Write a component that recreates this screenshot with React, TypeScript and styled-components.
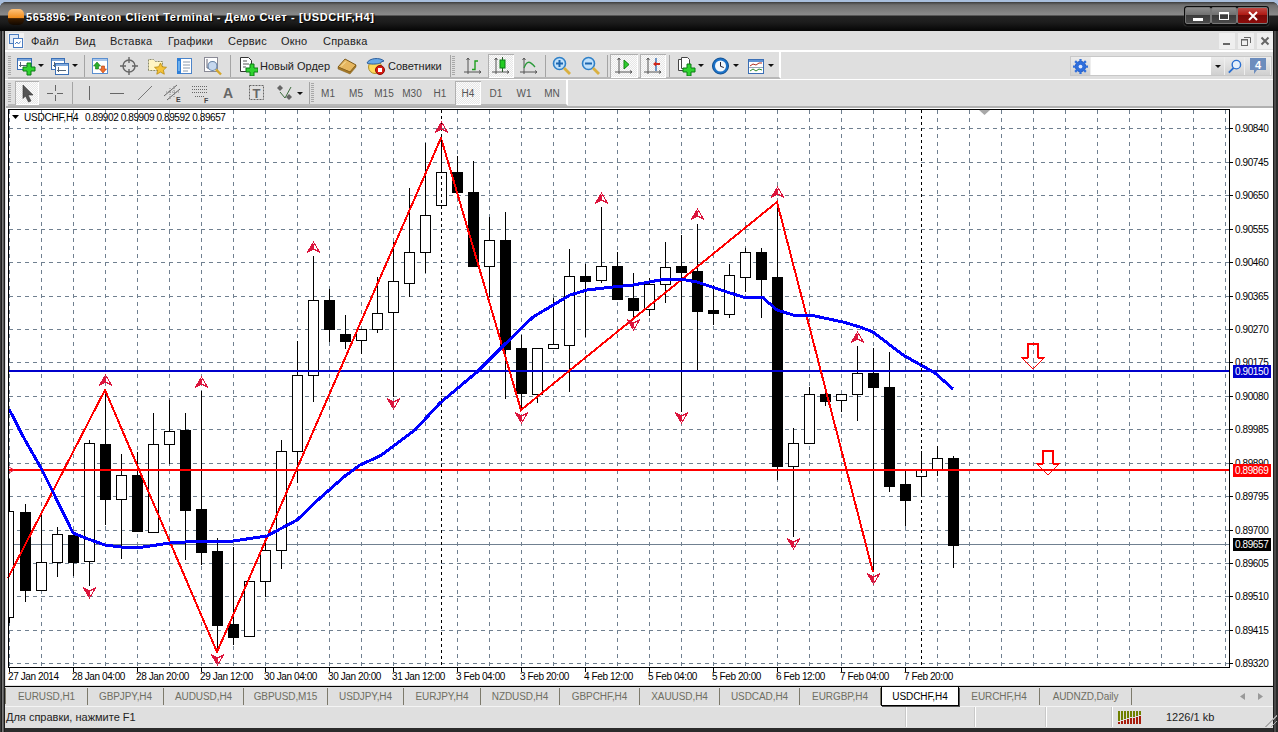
import React from "react";
import styled, { createGlobalStyle } from "styled-components";

const Global = createGlobalStyle`
  html, body { margin: 0; padding: 0; width: 1278px; height: 732px; overflow: hidden; background: #a8bedc; }
  * { box-sizing: border-box; }
`;
const UI = `"Liberation Sans", Arial, sans-serif`;

const Desktop = styled.div`width:1278px;height:732px;padding-top:2px;display:flex;`;
const Win = styled.div`
  width:1278px;height:730px;display:flex;flex-direction:column;
  border-radius:6px 6px 0 0;overflow:hidden;
  background:
    linear-gradient(90deg,#3a3a3a 0 1px,#1c1c1c 1px 2px,#7a7a7a 2px 3px,#5a5a5a 3px 4px,#1c1c1c 4px 5px,transparent 5px) left/5px 100% no-repeat,
    linear-gradient(90deg,#1c1c1c 0 1px,#4a4a4a 1px 3px,#2a2a2a 3px 5px) right/5px 100% no-repeat,
    #2b2b2b;
`;
const TitleBar = styled.div`
  height:29px;flex:none;display:flex;align-items:center;padding:0 8px 0 6px;
  background:linear-gradient(#3c3c3c 0,#6f6f6f 3px,#8a8a8a 13px,#222 14px,#1d1d1d 20px,#050505 29px);
`;
const TitleIcon = styled.div`
  width:16px;height:16px;margin:1px 2px 0 2px;border-radius:5px;
  background:linear-gradient(#ffc27a 0,#f08c1c 55%,#3a1c00 60%,#120800 100%);
`;
const TitleText = styled.div`
  flex:1;font:bold 11px ${UI};letter-spacing:.6px;color:#fff;text-shadow:1px 1px 1px #000;white-space:nowrap;
`;
const WinBtns = styled.div`
  display:flex;align-items:center;height:20px;padding:1px;border-radius:3px;background:#0c0c0c;box-shadow:0 0 1px #888;margin-right:1px;margin-top:-2px;
`;
const WinBtn = styled.div<{ $w: number; $red?: boolean }>`
  width:${p => p.$w}px;height:17px;display:flex;align-items:center;justify-content:center;border:1px solid #777;border-radius:2px;
  background:${p => p.$red ? "linear-gradient(#c04a44 0,#b01a14 45%,#7a0a08 50%,#8c0c0a 100%)" : "linear-gradient(#8c8c8c 0,#707070 45%,#3a3a3a 50%,#4a4a4a 100%)"};
`;
const Body = styled.div`
  flex:1;display:flex;flex-direction:column;margin:0 5px 4px 5px;min-height:0;background:#dfdfdf;
`;
const MenuBar = styled.div`
  height:20px;flex:none;display:flex;align-items:center;border-bottom:1px solid #fff;background:#dfdfdf;padding-left:3px;
`;
const MenuIcon = styled.div`width:16px;height:16px;margin-right:7px;display:flex;`;
const MenuItem = styled.span<{ $w: number }>`
  width:${p => p.$w}px;flex:none;font:11px ${UI};letter-spacing:.2px;color:#222;
`;
const MdiBtns = styled.div`margin-left:auto;display:flex;gap:3px;padding-right:0;`;
const MdiBtn = styled.div`
  width:16px;height:16px;background:#efefef;display:flex;align-items:center;justify-content:center;
`;
const ToolRow = styled.div<{ $h: number }>`
  height:${p => p.$h}px;flex:none;display:flex;align-items:center;background:#dfdfdf;position:relative;border-top:1px solid #fff;padding-left:3px;
`;
const Band = styled.div<{ $h: number }>`
  height:${p => p.$h}px;padding-top:2px;display:flex;align-items:center;border-right:2px solid #fff;border-bottom:2px solid #b8b8b8;
`;
const Grip = styled.div<{ $w?: number }>`
  width:${p => p.$w ?? 6}px;height:20px;flex:none;
  background:repeating-linear-gradient(#a8a8a8 0 1px,transparent 1px 2px) left/3px 100% no-repeat;
`;
const Sep = styled.div`width:4px;height:22px;flex:none;display:flex;justify-content:center;&::before{content:"";width:1px;background:#a4a4a4;}`;
const Tool = styled.div<{ $w: number; $on?: boolean; $pad?: number }>`
  width:${p => p.$w}px;height:24px;flex:none;display:flex;align-items:center;justify-content:${p => p.$pad !== undefined ? "flex-start" : "center"};
  padding-left:${p => p.$pad ?? 0}px;gap:1px;
  ${p => p.$on ? `background:repeating-conic-gradient(#e6e6e6 0 25%,#fbfbfb 0 50%) 0 0/2px 2px;box-shadow:inset 1px 1px 0 #b0b0b0,inset -1px -1px 0 #fff;margin:0 1px;width:${p.$w - 2}px;` : ""}
`;
const Caret = styled.i`
  display:block;width:0;height:0;border-left:3px solid transparent;border-right:3px solid transparent;border-top:3px solid #111;margin-left:1px;
`;
const ToolLabel = styled.span`font:11px ${UI};color:#222;margin-left:1px;white-space:nowrap;`;
const TfLabel = styled.span`font:10px ${UI};color:#555;`;
const Search = styled.div`
  position:absolute;right:1px;top:4px;width:202px;height:20px;display:flex;border:1px solid #c8c8c8;border-top-color:#c8c8c8;background:#dcdcdc;
`;
const SearchIcon = styled.div<{ $w: number }>`
  width:${p => p.$w}px;flex:none;display:flex;align-items:center;justify-content:center;background:linear-gradient(#ececec,#d0d0d0);border-right:1px solid #eee;
`;
const SearchInput = styled.div`flex:1;background:#fff;`;

const ChartPanel = styled.div`height:579px;flex:none;background:#fff;border-top:2px solid #b0b0b0;margin-left:1px;display:flex;`;
const TabBar = styled.div`
  height:21px;flex:none;display:flex;align-items:stretch;border-top:1px solid #000;border-bottom:1px solid #f4f4f4;background:#dfdfdf;position:relative;padding-left:0;margin-top:1px;
  &::before{content:"";width:1px;height:16px;margin-top:1px;background:#7d7a6c;}
`;
const Tab = styled.div<{ $w: number; $on?: boolean; $nosep?: boolean }>`
  width:${p => p.$w}px;flex:none;display:flex;align-items:center;justify-content:center;font:10px ${UI};letter-spacing:-.08px;
  height:${p => p.$on ? 19 : 17}px;margin-top:${p => p.$on ? 0 : 1}px;
  color:${p => p.$on ? "#000" : "#6e6e62"};
  background:${p => p.$on ? "#fff" : "transparent"};
  ${p => p.$on ? "border:1px solid #000;border-top:none;border-right-width:1px;box-shadow:1px 1px 0 #555;" : p.$nosep ? "" : "border-right:1px solid #7d7a6c;"}
`;
const TabNav = styled.div`position:absolute;right:9px;top:6px;display:flex;gap:11px;`;
const StatusBar = styled.div`height:20px;flex:none;display:flex;align-items:center;background:#dfdfdf;font:11px ${UI};color:#222;position:relative;`;
const StatusCell = styled.div<{ $w: number }>`
  width:${p => p.$w}px;flex:none;height:20px;display:flex;align-items:center;border-right:1px solid #fff;box-shadow:inset -1px 0 0 #c8c8c8;padding-left:1px;
`;
const StatusRest = styled.div`flex:1;display:flex;align-items:center;gap:24px;padding-left:5px;`;
const Gripper = styled.div`
  position:absolute;right:-4px;bottom:0;width:16px;height:16px;
  background:repeating-linear-gradient(135deg,transparent 0 2px,#aaa 2px 3px,transparent 3px 4px);
  clip-path:polygon(100% 0,100% 100%,0 100%);
`;
const Ico = styled.svg<{ $s?: number }>`display:block;flex:none;width:${p => p.$s ?? 20}px;height:${p => p.$s ?? 20}px;`;
const Meter = styled.svg`display:block;flex:none;width:24px;height:13px;`;
const ChartSvg = styled.svg`display:block;width:1267px;height:577px;font-family:"Liberation Sans",Arial,sans-serif;font-size:10px;letter-spacing:-.4px;`;

/* ---------- icons ---------- */
const PlusG = ({ x, y, s = 1 }: { x: number; y: number; s?: number }) => (
  <path transform={`translate(${x} ${y}) scale(${s})`} d="M-2-6h4v4h4v4h-4v4h-4v-4h-4v-4h4z" fill="#2fd32f" stroke="#0b7d14" strokeWidth="1" />
);
const Axes = ({ c = "#555" }: { c?: string }) => (
  <g stroke={c} fill="none"><path d="M5 2v16M1 16h17M3.5 4L5 2l1.5 2M16 14.5l2 1.5-2 1.5" /></g>
);
const MiniWin = ({ x, y, w = 13, h = 11 }: { x: number; y: number; w?: number; h?: number }) => (
  <g>
    <rect x={x + .5} y={y + .5} width={w} height={h} fill="#fff" stroke="#3b6fb5" />
    <rect x={x + 1} y={y + 1} width={w - 1} height="2" fill="#7fa9dc" />
    <path d={`M${x + 3.5} ${y + 4}v5M${x + 2} ${y + 7.5}h${w - 4}`} stroke="#567" />
  </g>
);
const INewChart = () => <Ico viewBox="0 0 20 20"><MiniWin x={1} y={2} w={14} h={11} /><PlusG x={13} y={13} /></Ico>;
const IProfiles = () => <Ico viewBox="0 0 20 20"><MiniWin x={1} y={2} w={13} h={11} /><MiniWin x={5} y={7} w={13} h={11} /></Ico>;
const IMarket = () => (
  <Ico viewBox="0 0 20 20">
    <rect x="2.5" y="2.5" width="15" height="15" fill="#fff" stroke="#5b8fd0" /><rect x="3" y="3" width="14" height="2" fill="#a9c6ea" />
    <path d="M7 6l3.5 4H8.5v3h-3v-3H3.5z" fill="#2cb02c" stroke="#117711" strokeWidth=".6" />
    <path d="M13 17l-3.5-4h2V10h3v3h2z" fill="#f0702c" stroke="#b03a10" strokeWidth=".6" />
  </Ico>
);
const ICross = () => (
  <Ico viewBox="0 0 20 20"><circle cx="10" cy="10" r="6" fill="none" stroke="#666" strokeWidth="1.4" /><path d="M10 1v6M10 13v6M1 10h6M13 10h6" stroke="#666" strokeWidth="1.4" /></Ico>
);
const IFolderStar = () => (
  <Ico viewBox="0 0 20 20">
    <path d="M1.5 14.5v-11h5l2 2h7v9z" fill="#fff5c4" stroke="#8a8a6a" strokeDasharray="2 1" />
    <path d="M13.5 7l1.8 3.8 4.2.5-3.1 2.8.9 4.1-3.8-2.1-3.7 2.1.8-4.1-3.1-2.8 4.2-.5z" fill="#f5c33a" stroke="#b88a10" strokeWidth=".8" />
  </Ico>
);
const IBook = () => (
  <Ico viewBox="0 0 20 20">
    <rect x="3.5" y="2.5" width="14" height="15" fill="#fff" stroke="#4d84c8" /><rect x="3" y="2" width="4" height="16" fill="#2f7fd8" />
    <path d="M9 6h7M9 9h7M9 12h7M9 15h5" stroke="#8a9aac" /><path d="M5 5v10" stroke="#aee0ff" />
  </Ico>
);
const ITester = () => (
  <Ico viewBox="0 0 20 20">
    <rect x="1.5" y="1.5" width="13" height="14" fill="#fff" stroke="#8a8a96" /><path d="M4 3v9h8" stroke="#667" fill="none" />
    <circle cx="9.5" cy="10" r="4.5" fill="#c6d8ef" stroke="#6a86a8" strokeWidth="1.2" /><path d="M13 13.5l5 5" stroke="#d4a62a" strokeWidth="2.4" />
  </Ico>
);
const IOrder = () => (
  <Ico viewBox="0 0 20 20">
    <path d="M2.5 1.5h8l3 3v11h-11z" fill="#fff" stroke="#333" /><path d="M5 5h4M5 8h6M5 11h3" stroke="#555" /><PlusG x={14} y={14} />
  </Ico>
);
const ITray = () => (
  <Ico viewBox="0 0 20 20"><path d="M1 11l7-8 11 6-6 7z" fill="#e6b760" stroke="#7e5a18" /><path d="M1 11l12 5 6-7v2l-6 7-12-5z" fill="#a87a28" stroke="#7e5a18" strokeWidth=".5" /><path d="M4 10.5l5-5" stroke="#fae6a8" /></Ico>
);
const IExpert = () => (
  <Ico viewBox="0 0 20 20">
    <circle cx="9" cy="11" r="6.5" fill="#ffd95a" stroke="#b0902a" />
    <path d="M1 7c2-5 13-6 17-2l-3 1c1 2-11 3-14 1z" fill="#68a8e6" stroke="#2c5e9c" />
    <circle cx="14" cy="14" r="4.5" fill="#d81a10" stroke="#8a0c08" /><rect x="12" y="12" width="4" height="4" fill="#fff" />
  </Ico>
);
const ILineBar = () => <Ico viewBox="0 0 20 20"><Axes /><path d="M9 13.5h3V5h3" stroke="#1ea01e" strokeWidth="1.4" fill="none" /></Ico>;
const ICandle = () => <Ico viewBox="0 0 20 20"><Axes /><path d="M11.5 1v15" stroke="#2a5a2a" /><rect x="9" y="4" width="5" height="8" fill="#22cc22" stroke="#0b7d14" /></Ico>;
const ICurve = () => <Ico viewBox="0 0 20 20"><Axes /><path d="M5 12c3-8 6-7 11-1" stroke="#2a9a3a" strokeWidth="1.3" fill="none" /></Ico>;
const IZoom = ({ minus }: { minus?: boolean }) => (
  <Ico viewBox="0 0 20 20">
    <circle cx="7.5" cy="7.5" r="6" fill="#bfe0fa" stroke="#2f80c8" strokeWidth="1.6" />
    <path d="M4 7.5h7" stroke="#1c66b0" strokeWidth="2" />{!minus && <path d="M7.5 4v7" stroke="#1c66b0" strokeWidth="2" />}
    <path d="M12 12l6 6" stroke="#d9b040" strokeWidth="2.8" />
  </Ico>
);
const IAuto = () => <Ico viewBox="0 0 20 20"><Axes /><path d="M10 4l5 4.5-5 4.5z" fill="#2ccc2c" stroke="#118811" /></Ico>;
const IShift = () => <Ico viewBox="0 0 20 20"><Axes /><path d="M13 2v13" stroke="#1656a8" strokeWidth="1.2" /><path d="M10 8l3-2.5V7h4v2h-4v1.5z" fill="#d0281c" /></Ico>;
const ITemplate = () => (
  <Ico viewBox="0 0 20 20"><path d="M2.5 3.5h6v11h-6z" fill="#fff" stroke="#444" /><path d="M5.5 1.5h6l2 2v9h-8z" fill="#fff" stroke="#444" /><PlusG x={13} y={14} /></Ico>
);
const IClock = () => (
  <Ico viewBox="0 0 20 20"><circle cx="9.5" cy="10" r="8" fill="#1b72c8" stroke="#0d4d90" /><circle cx="9.5" cy="10" r="5.5" fill="#f4f8fb" /><path d="M9.5 6v4.3l3.3 1.2" stroke="#223" fill="none" /></Ico>
);
const IIndic = () => (
  <Ico viewBox="0 0 20 20">
    <rect x="2.5" y="3.5" width="15" height="14" fill="#fff" stroke="#3b6fb5" /><rect x="3" y="4" width="14" height="2" fill="#5f93d4" />
    <path d="M4 10l3-2 3 1 3-2 3 0" stroke="#b03020" fill="none" /><path d="M4 15l3-2 3 2 3-2 3 1" stroke="#2c8a2c" fill="none" /><path d="M3 11.5h14" stroke="#9ab" />
  </Ico>
);
const IArrow = () => <Ico viewBox="0 0 20 20"><path d="M6 2l10 10h-5l3 6-2.5 1-3-6L6 15.500z" fill="#555" stroke="#333" strokeWidth=".6" /></Ico>;
const Thin = ({ d }: { d: string }) => <Ico viewBox="0 0 20 20"><path d={d} stroke="#666" fill="none" strokeWidth="1" shapeRendering="crispEdges" /></Ico>;
const IDiag = () => <Ico viewBox="0 0 20 20"><path d="M3 17L17 3" stroke="#777" fill="none" /></Ico>;
const IChan = () => (
  <Ico viewBox="0 0 20 20"><path d="M1 13L14 2M4 17L17 6" stroke="#666" /><path d="M7 5v11M11 3v11M3 9l13 0" stroke="#888" strokeDasharray="1 1" /><text x="13" y="19" fontSize="7" fontWeight="bold" fill="#444" fontFamily="Liberation Sans">E</text></Ico>
);
const IFib = () => (
  <Ico viewBox="0 0 20 20"><path d="M1 3.500h15M1 6.500h15M1 9.500h15M4 13.500h10" stroke="#666" strokeDasharray="1 1" /><text x="13" y="20" fontSize="7" fontWeight="bold" fill="#444" fontFamily="Liberation Sans">F</text></Ico>
);
const ILetter = () => <Ico viewBox="0 0 20 20"><text x="10" y="15" fontSize="14" fontWeight="bold" textAnchor="middle" fill="#666" fontFamily="Liberation Sans">A</text></Ico>;
const ILabel = () => (
  <Ico viewBox="0 0 20 20"><rect x="2.500" y="2.500" width="14" height="14" fill="none" stroke="#666" strokeDasharray="2 1" /><text x="9.500" y="14.500" fontSize="13" fontWeight="bold" textAnchor="middle" fill="#666" fontFamily="Liberation Sans">T</text></Ico>
);
const IShapes = () => (
  <Ico viewBox="0 0 20 20"><path d="M5 2l3 3-3 3-3-3z" fill="#666" /><path d="M14 11l3 3-3 3-3-3z" fill="#666" /><path d="M5 9l5 6 6-11" stroke="#3a6a3a" fill="none" /></Ico>
);
const IMenu = () => (
  <Ico $s={16} viewBox="0 0 16 16"><rect width="16" height="16" fill="#f2f2f2" /><rect x="1.500" y="1.500" width="9" height="9" fill="#dfe9f6" stroke="#4a7cc0" /><rect x="5.500" y="5.500" width="9" height="9" fill="#fff" stroke="#4a7cc0" /><path d="M7 11l2-2 1.500 2 2-2.500" stroke="#4a7cc0" fill="none" /></Ico>
);
const IGear = () => (
  <Ico $s={15} viewBox="0 0 16 16"><circle cx="8" cy="8" r="5.500" fill="#2f6fdc" stroke="#1c49a8" /><path d="M8 0v16M0 8h16M2.300 2.300l11.400 11.400M13.700 2.300L2.300 13.700" stroke="#2f6fdc" strokeWidth="2.400" /><circle cx="8" cy="8" r="2" fill="#dfe9ff" /></Ico>
);
const ISearch = () => (
  <Ico $s={15} viewBox="0 0 16 16"><circle cx="10" cy="6" r="4.500" fill="#e6f0fb" stroke="#2a6fd0" strokeWidth="1.500" /><path d="M7 9.500L2 14.500" stroke="#2a6fd0" strokeWidth="2" /></Ico>
);
const IChat = () => (
  <Ico viewBox="0 0 20 20"><path d="M2 2h16v12H9l-3 4v-4H2z" fill="#6d8dbd" /><text x="10" y="12.500" fontSize="11" fontWeight="bold" textAnchor="middle" fill="#fff" fontFamily="Liberation Sans">4</text></Ico>
);
const IndicatorBars = () => (
  <Meter viewBox="0 0 24 13" shapeRendering="crispEdges">
    {Array.from({ length: 8 }).map((_, i) => (
      <g key={i}><rect x={i * 3} y={0} width="2" height={10 - i * 0.9} fill="#6f8000" /><rect x={i * 3} y={11 - i * 0.9} width="2" height={2 + i * 0.9} fill="#a81c0c" /></g>
    ))}
  </Meter>
);

/* ---------- chart data (pixel rows of the picture) ---------- */
type C = [0 | 1, number, number, number, number];
// [black?, bodyTop, bodyBottom, wickHigh, wickLow] every 16px from x=9
const candles: C[] = [
  [0, 511, 617, 479, 623], [1, 512, 590, 504, 602], [0, 562, 590, 512, 590], [0, 534, 562, 527, 577], [1, 535, 562, 535, 576],
  [0, 443, 561, 440, 586], [1, 444, 499, 390, 525], [0, 475, 499, 454, 559], [1, 475, 531, 452, 531], [0, 444, 532, 413, 532],
  [0, 431, 444, 400, 464], [1, 430, 510, 413, 560], [1, 509, 552, 391, 565], [1, 551, 625, 538, 653], [1, 624, 637, 547, 645],
  [0, 581, 636, 581, 636], [0, 550, 581, 543, 597], [0, 451, 550, 440, 569], [0, 375, 451, 341, 483], [0, 300, 375, 256, 402],
  [1, 300, 329, 289, 342], [1, 334, 341, 315, 349], [0, 329, 340, 329, 354], [0, 313, 329, 277, 333], [0, 281, 312, 242, 397],
  [0, 252, 283, 188, 297], [0, 215, 252, 143, 273], [0, 172, 205, 138, 205], [1, 172, 192, 156, 192], [1, 192, 266, 161, 266],
  [0, 240, 266, 217, 297], [1, 240, 349, 212, 399], [1, 348, 393, 335, 410], [0, 348, 394, 348, 403], [0, 344, 348, 298, 348],
  [0, 276, 345, 249, 392], [1, 276, 281, 264, 337], [0, 266, 280, 207, 283], [1, 266, 299, 252, 299], [1, 298, 310, 273, 318],
  [0, 284, 309, 278, 316], [0, 267, 284, 242, 303], [1, 266, 272, 235, 412], [1, 271, 311, 224, 370], [1, 310, 313, 285, 325],
  [0, 275, 314, 264, 318], [0, 252, 277, 248, 292], [1, 252, 279, 248, 318], [1, 277, 466, 202, 480], [0, 443, 466, 428, 537],
  [0, 394, 443, 387, 444], [1, 394, 401, 390, 406], [0, 394, 400, 394, 412], [0, 373, 394, 346, 421], [1, 373, 387, 348, 572],
  [1, 387, 486, 352, 492], [1, 484, 500, 470, 526], [0, 470, 476, 451, 496], [0, 458, 470, 446, 476], [1, 458, 545, 456, 568],
];
const ma = "9,409 25,440 41,468 53,492 73,533 88,539 105,545 121,547 143,547 170,543 200,541 233,541 267,536 297,520 320,498 345,476 360,465 380,456 415,430 440,403 477,372 502,347 533,317 570,295 587,290 613,287 633,285 660,280 680,279 697,282 727,292 743,297 762,297 777,310 793,315 810,315 843,322 860,327 873,332 903,355 935,373 953,389";
const zig = "8,578 105,390 217,652 441,138 521,410 777,202 873,572";
const up = [[105, 380], [201, 382], [313, 247], [441, 127], [601, 198], [697, 214], [777, 192], [857, 337]];
const down = [[89, 593], [217, 660], [393, 404], [521, 418], [633, 325], [681, 418], [793, 544], [873, 579]];
const prices = ["0.90840", "0.90745", "0.90650", "0.90555", "0.90460", "0.90365", "0.90270", "0.90175", "0.90080", "0.89985", "0.89890", "0.89795", "0.89700", "0.89605", "0.89510", "0.89415", "0.89320"];
const gridY = prices.map((_, i) => Math.round(128.3 + 33.44 * i));
const gridX = Array.from({ length: 39 }).map((_, i) => 9 + 32 * i);
const times = ["27 Jan 2014", "28 Jan 04:00", "28 Jan 20:00", "29 Jan 12:00", "30 Jan 04:00", "30 Jan 20:00", "31 Jan 12:00", "3 Feb 04:00", "3 Feb 20:00", "4 Feb 12:00", "5 Feb 04:00", "5 Feb 20:00", "6 Feb 12:00", "7 Feb 04:00", "7 Feb 20:00"];
const tags: [string, number, string][] = [["0.90150", 371, "#0000cc"], ["0.89869", 470, "#ff0000"], ["0.89657", 544, "#000"]];

const Fractal = ({ x, y, isUp }: { x: number; y: number; isUp: boolean }) => (
  <g transform={`translate(${x + .5} ${y}) scale(1 ${isUp ? 1 : -1})`} fill="none" stroke="#dc143c" strokeWidth="1" shapeRendering="crispEdges">
    <path d="M0-5L6 5 0 2-6 5z" /><path d="M-.5-3L-3.500 3.500 0 1.500z" fill="#dc143c" />
  </g>
);
const BigArrow = ({ x, top, neck, tip }: { x: number; top: number; neck: number; tip: number }) => (
  <g fill="none" shapeRendering="crispEdges">
    <path d={`M${x - 5} ${neck}V${top}H${x + 5}V${neck}`} stroke="#ff0000" strokeWidth="2" />
    <path d={`M${x - 5} ${neck}H${x - 11}L${x} ${tip}L${x + 11} ${neck}H${x + 5}`} stroke="#ff0000" strokeWidth="1.200" />
  </g>
);

const Chart = () => (
  <ChartSvg viewBox="6 108 1267 577">
    <g stroke="#708090" strokeDasharray="4 4" shapeRendering="crispEdges">
      {gridX.map(x => <line key={x} x1={x + .5} x2={x + .5} y1={110} y2={667} />)}
      {gridY.map(y => <line key={y} x1={9} x2={1229} y1={y + .5} y2={y + .5} />)}
    </g>
    <line x1={9} x2={1229} y1={544.5} y2={544.5} stroke="#708090" shapeRendering="crispEdges" />
    <g shapeRendering="crispEdges">
      {candles.map(([b, t, bt, h, l], i) => {
        const c = 9 + i * 16;
        return (
          <g key={i}>
            <line x1={c + .5} x2={c + .5} y1={h} y2={l} stroke="#000" />
            {b
              ? <rect x={Math.max(c - 5, 9)} y={t} width={c - 5 < 9 ? 6 : 11} height={bt - t + 1} fill="#000" />
              : <rect x={Math.max(c - 5, 8) + .5} y={t + .5} width={c - 5 < 9 ? 5 : 10} height={bt - t} fill="#fff" stroke="#000" />}
          </g>
        );
      })}
    </g>
    <g shapeRendering="crispEdges">
      <rect x={9} y={370} width={1220} height={2} fill="#0000cc" />
      <rect x={9} y={469} width={1220} height={2} fill="#ff0000" />
      <polyline points={zig} fill="none" stroke="#ff0000" strokeWidth="2" />
      <polyline points={ma} fill="none" stroke="#0000ff" strokeWidth="3" />
    </g>
    <g stroke="#000" strokeDasharray="3 3" shapeRendering="crispEdges">
      <line x1={441.5} x2={441.5} y1={110} y2={667} />
      <line x1={921.5} x2={921.5} y1={110} y2={667} />
    </g>
    {up.map(([x, y]) => <Fractal key={x} x={x} y={y} isUp />)}
    {down.map(([x, y]) => <Fractal key={x} x={x} y={y} isUp={false} />)}
    <path d="M9 467l5 3-5 3" stroke="#dc143c" fill="none" />
    <BigArrow x={1033} top={344} neck={358} tip={369} />
    <BigArrow x={1048} top={451} neck={464} tip={475} />
    <path d="M979 110h11l-5.500 5z" fill="#a8a8a8" />
    <rect x={8.500} y={109.500} width={1221} height={558} fill="none" stroke="#000" shapeRendering="crispEdges" />
    <path d="M12 115h7l-3.500 4z" fill="#000" />
    <text x={24} y={121} fill="#000" letterSpacing="-.2">USDCHF,H4</text>
    <text x={85} y={121} fill="#000">0.89902 0.89909 0.89592 0.89657</text>
    {prices.map((p, i) => (
      <g key={p}>
        <line x1={1230} x2={1233} y1={gridY[i] + .5} y2={gridY[i] + .5} stroke="#000" shapeRendering="crispEdges" />
        <text x={1235} y={gridY[i] + 3.5} fill="#000">{p}</text>
      </g>
    ))}
    {tags.map(([p, y, col]) => (
      <g key={p}>
        <rect x={1233} y={y - 6} width={38} height={13} fill={col} />
        <text x={1235} y={y + 4} fill="#fff">{p}</text>
      </g>
    ))}
    {times.map((t, i) => (
      <g key={t}>
        <line x1={9.5 + i * 64} x2={9.5 + i * 64} y1={668} y2={672} stroke="#000" shapeRendering="crispEdges" />
        <text x={8 + i * 64} y={680} fill="#000">{t}</text>
      </g>
    ))}
  </ChartSvg>
);

const tabs: [string, number][] = [["EURUSD,H1", 82], ["GBPJPY,H4", 76], ["AUDUSD,H4", 80], ["GBPUSD,M15", 84], ["USDJPY,H4", 76], ["EURJPY,H4", 77], ["NZDUSD,H4", 79], ["GBPCHF,H4", 80], ["XAUUSD,H4", 80], ["USDCAD,H4", 80], ["EURGBP,H4", 81]];
const tabsAfter: [string, number][] = [["EURCHF,H4", 81], ["AUDNZD,Daily", 92]];
const menu: [string, number][] = [["Файл", 44], ["Вид", 35], ["Вставка", 58], ["Графики", 60], ["Сервис", 53], ["Окно", 42], ["Справка", 60]];
const tfs = ["M1", "M5", "M15", "M30", "H1", "H4", "D1", "W1", "MN"];

export default function App() {
  return (
    <Desktop>
      <Global />
      <Win>
        <TitleBar>
          <TitleIcon />
          <TitleText>565896: Panteon Client Terminal - Демо Счет - [USDCHF,H4]</TitleText>
          <WinBtns>
            <WinBtn $w={26}><Ico $s={12} viewBox="0 0 12 12"><rect x="1" y="8" width="10" height="3" fill="#fff" /></Ico></WinBtn>
            <WinBtn $w={26}><Ico $s={12} viewBox="0 0 12 12"><rect x="1.500" y="2.500" width="9" height="7" fill="none" stroke="#fff" /><rect x="1" y="2" width="10" height="2" fill="#fff" /></Ico></WinBtn>
            <WinBtn $w={31} $red><Ico $s={12} viewBox="0 0 12 12"><path d="M2 2l8 8M10 2l-8 8" stroke="#fff" strokeWidth="2" /></Ico></WinBtn>
          </WinBtns>
        </TitleBar>
        <Body>
          <MenuBar>
            <MenuIcon><IMenu /></MenuIcon>
            {menu.map(([m, w]) => <MenuItem key={m} $w={w}>{m}</MenuItem>)}
            <MdiBtns>
              <MdiBtn><Ico $s={12} viewBox="0 0 12 12"><rect x="2" y="8" width="7" height="2" fill="#666" /></Ico></MdiBtn>
              <MdiBtn><Ico $s={12} viewBox="0 0 12 12"><rect x="1.500" y="4.500" width="6" height="6" fill="none" stroke="#666" /><path d="M4 2.500h6.500V8" fill="none" stroke="#666" /><path d="M1 5h7" stroke="#666" /></Ico></MdiBtn>
              <MdiBtn><Ico $s={12} viewBox="0 0 12 12"><path d="M2.500 2.500l7 7M9.500 2.500l-7 7" stroke="#666" strokeWidth="2" /></Ico></MdiBtn>
            </MdiBtns>
          </MenuBar>
          <ToolRow $h={28}>
            <Band $h={27}>
              <Grip $w={6} />
              <Tool $w={32}><INewChart /><Caret /></Tool>
              <Tool $w={36}><IProfiles /><Caret /></Tool>
              <Sep />
              <Tool $w={28}><IMarket /></Tool>
              <Tool $w={30}><ICross /></Tool>
              <Tool $w={26}><IFolderStar /></Tool>
              <Tool $w={28}><IBook /></Tool>
              <Tool $w={30}><ITester /></Tool>
              <Sep />
              <Tool $w={102} $pad={6}><IOrder /><ToolLabel>Новый Ордер</ToolLabel></Tool>
              <Tool $w={25}><ITray /></Tool>
              <Tool $w={89} $pad={7}><IExpert /><ToolLabel>Советники</ToolLabel></Tool>
              <Sep />
              <Grip $w={7} />
              <Tool $w={28}><ILineBar /></Tool>
              <Tool $w={28} $on><ICandle /></Tool>
              <Tool $w={28}><ICurve /></Tool>
              <Sep />
              <Tool $w={29}><IZoom /></Tool>
              <Tool $w={29}><IZoom minus /></Tool>
              <Sep />
              <Tool $w={30} $on><IAuto /></Tool>
              <Tool $w={28} $on><IShift /></Tool>
              <Sep />
              <Tool $w={38}><ITemplate /><Caret /></Tool>
              <Tool $w={32}><IClock /><Caret /></Tool>
              <Tool $w={38}><IIndic /><Caret /></Tool>
            </Band>
            <Search>
              <SearchIcon $w={20}><IGear /></SearchIcon>
              <SearchInput />
              <SearchIcon $w={14}><Caret /></SearchIcon>
              <SearchIcon $w={20}><ISearch /></SearchIcon>
              <SearchIcon $w={26}><IChat /></SearchIcon>
            </Search>
          </ToolRow>
          <ToolRow $h={27}>
            <Band $h={26}>
              <Grip $w={6} />
              <Tool $w={26} $on><IArrow /></Tool>
              <Tool $w={30}><Thin d="M10 2v6M10 12v6M2 10h6M12 10h6" /></Tool>
              <Sep />
              <Tool $w={29}><Thin d="M10.500 3v14" /></Tool>
              <Tool $w={28}><Thin d="M3 10.500h14" /></Tool>
              <Tool $w={28}><IDiag /></Tool>
              <Tool $w={28}><IChan /></Tool>
              <Tool $w={27}><IFib /></Tool>
              <Tool $w={28}><ILetter /></Tool>
              <Tool $w={29}><ILabel /></Tool>
              <Tool $w={36}><IShapes /><Caret /></Tool>
              <Sep />
              <Grip $w={3} />
              {tfs.map(t => <Tool key={t} $w={28} $on={t === "H4"}><TfLabel>{t}</TfLabel></Tool>)}
            </Band>
          </ToolRow>
          <ChartPanel><Chart /></ChartPanel>
          <TabBar>
            {tabs.map(([t, w]) => <Tab key={t} $w={w}>{t}</Tab>)}
            <Tab $w={78} $on>USDCHF,H4</Tab>
            {tabsAfter.map(([t, w]) => <Tab key={t} $w={w}>{t}</Tab>)}
            <TabNav>
              <Ico $s={7} viewBox="0 0 7 7"><path d="M6 0v7L1 3.500z" fill="#999" /></Ico>
              <Ico $s={7} viewBox="0 0 7 7"><path d="M1 0v7l5-3.500z" fill="#999" /></Ico>
            </TabNav>
          </TabBar>
          <StatusBar>
            <StatusCell $w={902}>Для справки, нажмите F1</StatusCell>
            <StatusCell $w={69} />
            <StatusCell $w={71} />
            <StatusCell $w={66} />
            <StatusRest><IndicatorBars /><span>1226/1 kb</span></StatusRest>
            <Gripper />
          </StatusBar>
        </Body>
      </Win>
    </Desktop>
  );
}
